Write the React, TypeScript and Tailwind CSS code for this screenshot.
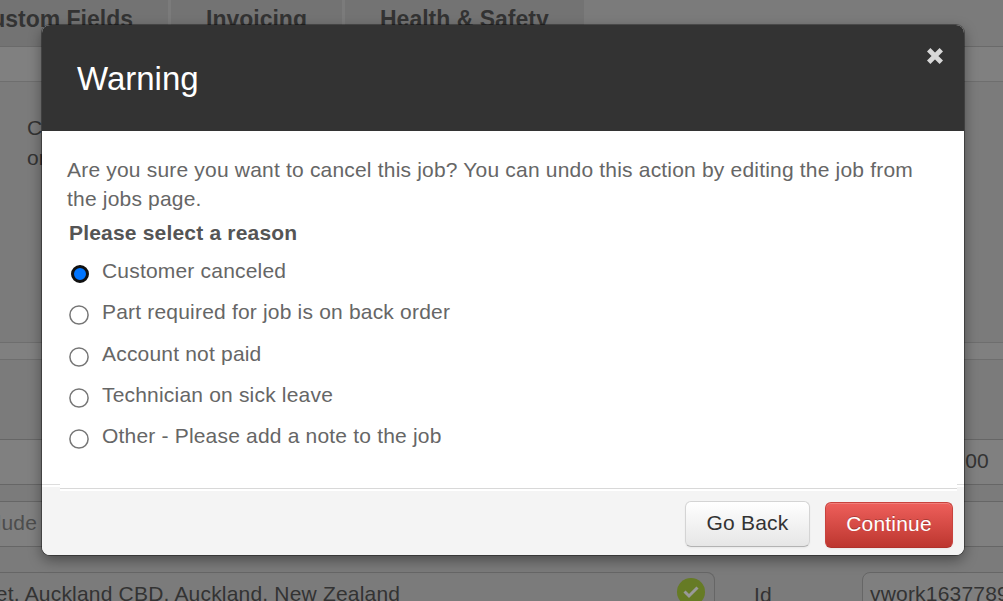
type Reason = {
    label: string
    selected?: boolean
}

const reasons: Reason[] = [
    { label: "Customer canceled", selected: true },
    { label: "Part required for job is on back order" },
    { label: "Account not paid" },
    { label: "Technician on sick leave" },
    { label: "Other - Please add a note to the job" },
]

const JobPage: React.FC = () => {
    return (
        <div className="flex h-full w-full flex-col overflow-hidden bg-[#7b7b7b] text-[#333]">
            <div className="flex h-[47px] shrink-0 gap-[3px] border-b border-[#6a6a6a] text-[23px] leading-[38px] font-bold tracking-normal whitespace-nowrap">
                <div className="flex w-[168px] justify-end bg-[#737373] pr-[35px]">Custom Fields</div>
                <div className="w-[171px] bg-[#737373] pl-[35px]">Invoicing</div>
                <div className="w-[239px] bg-[#737373] pl-[35px]">Health &amp; Safety</div>
            </div>
            <div className="h-[35px] shrink-0 border-b border-[#6e6e6e] bg-[#808080]" />
            <div className="h-[260px] shrink-0 pt-[31px] pl-[27px] leading-[30px]">
                <p>C</p>
                <p>or</p>
            </div>
            <div className="h-[18px] shrink-0 border-y border-[#6e6e6e] bg-[#808080]" />
            <div className="h-[79px] shrink-0" />
            <div className="flex h-[46px] shrink-0 items-center justify-end border-y border-[#666] bg-[#808080] pr-[14px] pb-[2px]">
                00
            </div>
            <div className="h-4 shrink-0" />
            <div className="flex h-[46px] shrink-0 items-center border-y border-[#666] bg-[#808080] pb-[2px] text-[#4d4d4d]">
                <span className="flex w-[37px] justify-end whitespace-nowrap">Include</span>
            </div>
            <div className="mt-[25px] flex h-[46px] shrink-0 whitespace-nowrap">
                <div className="flex w-[715px] shrink-0 items-start justify-between rounded-r-lg border border-l-0 border-[#666] pr-[9px] pt-[5px]">
                    <span className="-ml-4 pt-px leading-[30px]">eet, Auckland CBD, Auckland, New Zealand</span>
                    <span className="flex size-7 shrink-0 items-center justify-center rounded-full bg-[#667b25]">
                        <svg className="size-4" viewBox="0 0 16 16" fill="none" stroke="#999" strokeWidth="3">
                            <path d="M1.5 7.5 6 12 14.5 3.5" />
                        </svg>
                    </span>
                </div>
                <span className="w-[147px] shrink-0 pt-[8px] pl-[39px] leading-[30px]">Id</span>
                <div className="w-[180px] shrink-0 rounded-l-lg border border-[#666] bg-[#7f7f7f] pt-[6px] pl-[7px] leading-[30px]">
                    vwork1637789
                </div>
            </div>
        </div>
    )
}

const WarningDialog: React.FC = () => {
    return (
        <div className="flex h-[530px] w-[922px] flex-col overflow-hidden rounded-lg bg-white shadow-[0_0_0_1px_rgba(0,0,0,0.35),0_5px_14px_rgba(0,0,0,0.4)]">
            <div className="flex h-[106px] shrink-0 justify-between bg-[#333] pr-[21px] pl-[35px]">
                <h1 className="pt-[34px] text-[33px] leading-10 tracking-normal text-white">Warning</h1>
                <svg className="mt-[23px] size-4 text-[#d8d8d8]" viewBox="0 0 16 16" stroke="currentColor" strokeWidth="4.8">
                    <path d="M1.7 1.7 14.3 14.3M14.3 1.7 1.7 14.3" />
                </svg>
            </div>
            <div className="flex h-[353px] shrink-0 flex-col pt-6 pl-[25px] text-[#666]">
                <p className="w-[860px] leading-[29px]">
                    Are you sure you want to cancel this job? You can undo this action by editing the job from the jobs page.
                </p>
                <h2 className="mt-[5px] ml-[2px] leading-[30px] font-bold text-[#555]">Please select a reason</h2>
                <div className="mt-2">
                    {reasons.map((reason) => (
                        <label key={reason.label} className="flex h-[41.25px] items-start pl-[2px]">
                            {reason.selected ? (
                                <span className="mt-[9px] mr-[13px] ml-[2px] size-[18px] rounded-full border-[3px] border-[#111] bg-[#0075ff]" />
                            ) : (
                                <svg className="mt-2 mr-[13px] size-5" viewBox="0 0 20 20" fill="none" stroke="#767676" strokeWidth="1.5">
                                    <circle cx="10" cy="10" r="9.1" />
                                </svg>
                            )}
                            <span className="leading-[30px]">{reason.label}</span>
                        </label>
                    ))}
                </div>
            </div>
            <div className="flex grow bg-[#f4f4f4]">
                <div className="h-[3px] w-[18px] border-t border-[#ddd] bg-white" />
                <div className="flex w-[897px] flex-col">
                    <div className="h-1 bg-white" />
                    <div className="h-[3px] border-t border-[#d8d8d8] bg-white" />
                    <div className="flex justify-end gap-[15px] pt-[10px] pr-1">
                        <button className="h-[46px] w-[125px] rounded-md border border-[#d4d4d4] border-b-[#b3b3b3] bg-linear-to-b from-white to-[#e6e6e6] pb-[2px] text-[#333] shadow-[0_1px_2px_rgba(0,0,0,0.05)]">
                            Go Back
                        </button>
                        <button className="mt-px h-[46px] w-32 rounded-md border border-[#c8433e] border-b-[#b0312b] bg-linear-to-b from-[#ee5f5b] to-[#bd362f] pb-[2px] text-white shadow-[inset_0_1px_0_rgba(255,255,255,0.2),0_1px_2px_rgba(0,0,0,0.05)] text-shadow-[0_-1px_0_rgba(0,0,0,0.25)]">
                            Continue
                        </button>
                    </div>
                </div>
                <div className="h-[3px] w-[7px] border-t border-[#ddd] bg-white" />
            </div>
        </div>
    )
}

const App: React.FC = () => {
    return (
        <div className="relative h-[601px] w-[1003px] overflow-hidden font-['Liberation_Sans',Arial,sans-serif] text-[21px] tracking-[0.19px]">
            <JobPage />
            <div className="absolute inset-0 pt-[25px] pl-[42px]">
                <WarningDialog />
            </div>
        </div>
    )
}

export default App
